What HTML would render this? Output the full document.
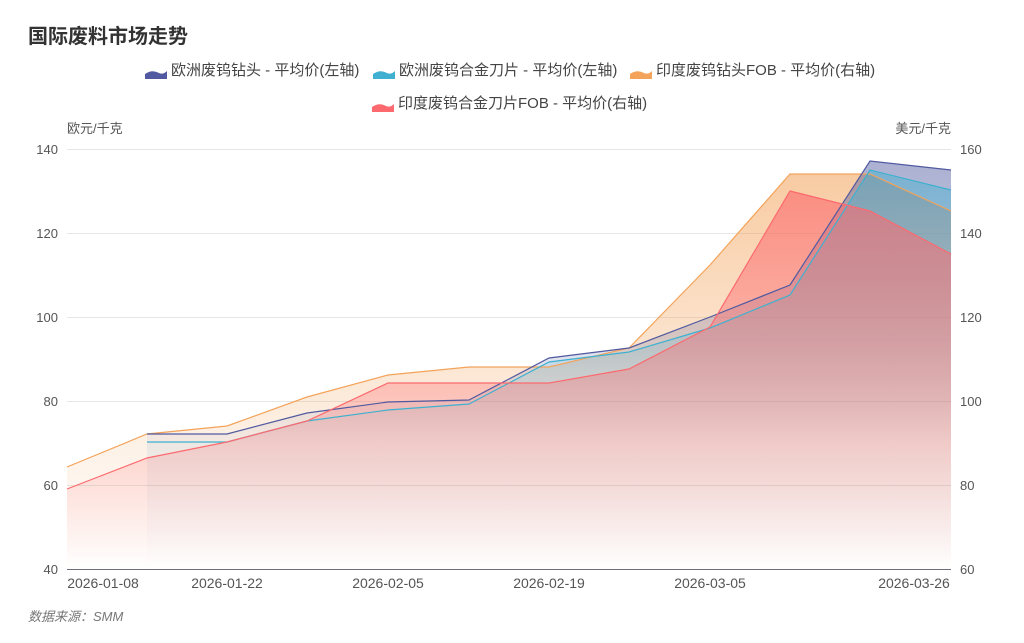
<!DOCTYPE html>
<html><head><meta charset="utf-8"><style>
body{margin:0;width:1024px;height:643px;background:#fff;font-family:"Liberation Sans","Noto Sans CJK SC",sans-serif;overflow:hidden}
</style></head><body>
<svg width="1024" height="643" xmlns="http://www.w3.org/2000/svg" style="position:absolute;left:0;top:0">
<defs>
<linearGradient id="go" gradientUnits="userSpaceOnUse" x1="0" y1="149" x2="0" y2="569"><stop offset="0" stop-color="#f3a35a" stop-opacity="0.6"/><stop offset="0.7" stop-color="#f3a35a" stop-opacity="0.15"/><stop offset="1" stop-color="#f3a35a" stop-opacity="0"/></linearGradient>
<linearGradient id="gb" gradientUnits="userSpaceOnUse" x1="0" y1="149" x2="0" y2="569"><stop offset="0" stop-color="#515aa0" stop-opacity="0.5"/><stop offset="0.7" stop-color="#515aa0" stop-opacity="0.05"/><stop offset="1" stop-color="#515aa0" stop-opacity="0"/></linearGradient>
<linearGradient id="gc" gradientUnits="userSpaceOnUse" x1="0" y1="149" x2="0" y2="569"><stop offset="0" stop-color="#3fb0cf" stop-opacity="0.5"/><stop offset="0.7" stop-color="#3fb0cf" stop-opacity="0.05"/><stop offset="1" stop-color="#3fb0cf" stop-opacity="0"/></linearGradient>
<linearGradient id="gr" gradientUnits="userSpaceOnUse" x1="0" y1="149" x2="0" y2="569"><stop offset="0" stop-color="#fc6a6f" stop-opacity="0.7"/><stop offset="0.6" stop-color="#fc6a6f" stop-opacity="0.3"/><stop offset="1" stop-color="#fc6a6f" stop-opacity="0"/></linearGradient>
</defs>
<text x="28" y="43" font-size="20" font-weight="bold" fill="#333">国际废料市场走势</text>
<g font-size="15" fill="#444">
<path d="M145 74 q7-5 14-1 q4 2 8-2 v8 h-22z" fill="#515aa0"/><text x="171" y="75">欧洲废钨钻头 - 平均价(左轴)</text>
<path d="M373 74 q7-5 14-1 q4 2 8-2 v8 h-22z" fill="#3fb0cf"/><text x="399" y="75">欧洲废钨合金刀片 - 平均价(左轴)</text>
<path d="M630 74 q7-5 14-1 q4 2 8-2 v8 h-22z" fill="#f3a35a"/><text x="656" y="75">印度废钨钻头FOB - 平均价(右轴)</text>
<path d="M372 107 q7-5 14-1 q4 2 8-2 v8 h-22z" fill="#fc6a6f"/><text x="398" y="108">印度废钨合金刀片FOB - 平均价(右轴)</text>
</g>
<g font-size="13" fill="#555">
<text x="67" y="133">欧元/千克</text><text x="951" y="133" text-anchor="end">美元/千克</text>
<g text-anchor="end"><text x="58" y="154">140</text><text x="58" y="238">120</text><text x="58" y="322">100</text><text x="58" y="406">80</text><text x="58" y="490">60</text><text x="58" y="574">40</text></g>
<text x="960" y="154">160</text><text x="960" y="238">140</text><text x="960" y="322">120</text><text x="960" y="406">100</text><text x="960" y="490">80</text><text x="960" y="574">60</text>
<g font-size="14" text-anchor="middle"><text x="103" y="588">2026-01-08</text><text x="227" y="588">2026-01-22</text><text x="388" y="588">2026-02-05</text><text x="549" y="588">2026-02-19</text><text x="710" y="588">2026-03-05</text><text x="914" y="588">2026-03-26</text></g>
</g>
<text x="28" y="621" font-size="13" font-style="italic" fill="#777">数据来源：SMM</text>
<g stroke="#e6e6e6" stroke-width="1"><line x1="67" y1="149.5" x2="951" y2="149.5"/><line x1="67" y1="233.5" x2="951" y2="233.5"/><line x1="67" y1="317.5" x2="951" y2="317.5"/><line x1="67" y1="401.5" x2="951" y2="401.5"/><line x1="67" y1="485.5" x2="951" y2="485.5"/></g>
<path d="M67 467 L147 434 L227 426 L307 397 L388 375 L469 367 L549 367 L629 348 L710 265 L790 174 L870 174 L951 211 L951 569 L67 569Z" fill="url(#go)"/>
<path d="M147 434 L227 434 L307 413 L388 402 L469 400 L549 358 L629 348 L710 317 L790 285 L870 161 L951 170 L951 569 L147 569Z" fill="url(#gb)"/>
<path d="M147 442 L227 442 L307 421 L388 410 L469 404 L549 362 L629 352 L710 328 L790 295 L870 170 L951 190 L951 569 L147 569Z" fill="url(#gc)"/>
<path d="M67 489 L147 458 L227 442 L307 421 L388 383 L469 383 L549 383 L629 369 L710 327 L790 191 L870 211 L951 254 L951 569 L67 569Z" fill="url(#gr)"/>
<line x1="67" y1="569.5" x2="951" y2="569.5" stroke="#6e7079"/>
<g fill="none" stroke-width="1.2">
<path d="M67 467 L147 434 L227 426 L307 397 L388 375 L469 367 L549 367 L629 348 L710 265 L790 174 L870 174 L951 211" stroke="#f3a35a"/>
<path d="M147 434 L227 434 L307 413 L388 402 L469 400 L549 358 L629 348 L710 317 L790 285 L870 161 L951 170" stroke="#515aa0"/>
<path d="M147 442 L227 442 L307 421 L388 410 L469 404 L549 362 L629 352 L710 328 L790 295 L870 170 L951 190" stroke="#3fb0cf"/>
<path d="M67 489 L147 458 L227 442 L307 421 L388 383 L469 383 L549 383 L629 369 L710 327 L790 191 L870 211 L951 254" stroke="#fc6a6f"/>
</g>
</svg>
</body></html>
